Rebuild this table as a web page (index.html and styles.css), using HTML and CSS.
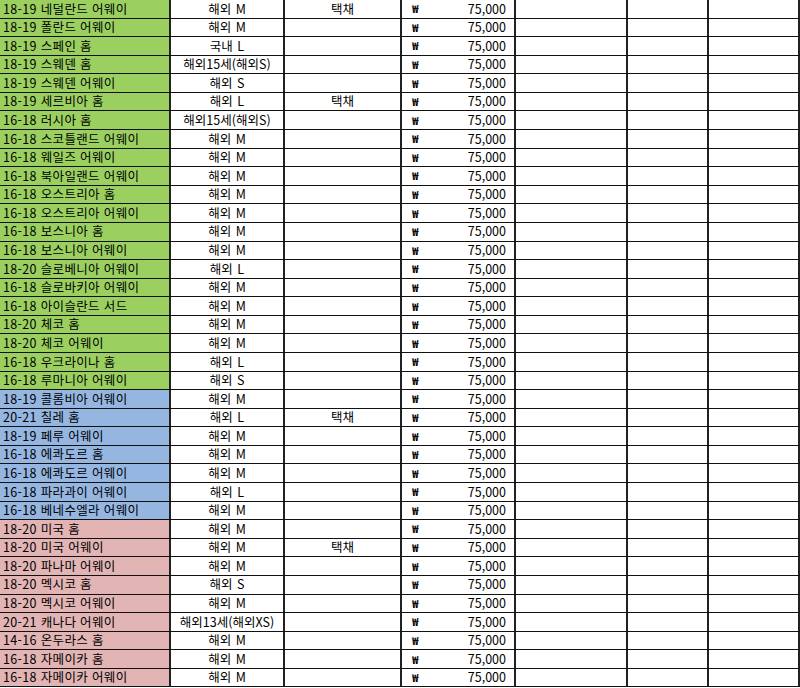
FILE: index.html
```html
<!DOCTYPE html>
<html lang="ko">
<head>
<meta charset="utf-8">
<title>유니폼 목록</title>
<link rel="stylesheet" href="styles.css">
</head>
<body>
<div class="sheet">
  <div class="row"><div class="c name g">18-19 네덜란드 어웨이</div><div class="c size">해외 M</div><div class="c tag">택채</div><div class="c price"><span class="won">₩</span><span>75,000</span></div><div class="c"></div><div class="c"></div><div class="c"></div></div>
  <div class="row"><div class="c name g">18-19 폴란드 어웨이</div><div class="c size">해외 M</div><div class="c tag"></div><div class="c price"><span class="won">₩</span><span>75,000</span></div><div class="c"></div><div class="c"></div><div class="c"></div></div>
  <div class="row"><div class="c name g">18-19 스페인 홈</div><div class="c size">국내 L</div><div class="c tag"></div><div class="c price"><span class="won">₩</span><span>75,000</span></div><div class="c"></div><div class="c"></div><div class="c"></div></div>
  <div class="row"><div class="c name g">18-19 스웨덴 홈</div><div class="c size">해외15세(해외S)</div><div class="c tag"></div><div class="c price"><span class="won">₩</span><span>75,000</span></div><div class="c"></div><div class="c"></div><div class="c"></div></div>
  <div class="row"><div class="c name g">18-19 스웨덴 어웨이</div><div class="c size">해외 S</div><div class="c tag"></div><div class="c price"><span class="won">₩</span><span>75,000</span></div><div class="c"></div><div class="c"></div><div class="c"></div></div>
  <div class="row"><div class="c name g">18-19 세르비아 홈</div><div class="c size">해외 L</div><div class="c tag">택채</div><div class="c price"><span class="won">₩</span><span>75,000</span></div><div class="c"></div><div class="c"></div><div class="c"></div></div>
  <div class="row"><div class="c name g">16-18 러시아 홈</div><div class="c size">해외15세(해외S)</div><div class="c tag"></div><div class="c price"><span class="won">₩</span><span>75,000</span></div><div class="c"></div><div class="c"></div><div class="c"></div></div>
  <div class="row"><div class="c name g">16-18 스코틀랜드 어웨이</div><div class="c size">해외 M</div><div class="c tag"></div><div class="c price"><span class="won">₩</span><span>75,000</span></div><div class="c"></div><div class="c"></div><div class="c"></div></div>
  <div class="row"><div class="c name g">16-18 웨일즈 어웨이</div><div class="c size">해외 M</div><div class="c tag"></div><div class="c price"><span class="won">₩</span><span>75,000</span></div><div class="c"></div><div class="c"></div><div class="c"></div></div>
  <div class="row"><div class="c name g">16-18 북아일랜드 어웨이</div><div class="c size">해외 M</div><div class="c tag"></div><div class="c price"><span class="won">₩</span><span>75,000</span></div><div class="c"></div><div class="c"></div><div class="c"></div></div>
  <div class="row"><div class="c name g">16-18 오스트리아 홈</div><div class="c size">해외 M</div><div class="c tag"></div><div class="c price"><span class="won">₩</span><span>75,000</span></div><div class="c"></div><div class="c"></div><div class="c"></div></div>
  <div class="row"><div class="c name g">16-18 오스트리아 어웨이</div><div class="c size">해외 M</div><div class="c tag"></div><div class="c price"><span class="won">₩</span><span>75,000</span></div><div class="c"></div><div class="c"></div><div class="c"></div></div>
  <div class="row"><div class="c name g">16-18 보스니아 홈</div><div class="c size">해외 M</div><div class="c tag"></div><div class="c price"><span class="won">₩</span><span>75,000</span></div><div class="c"></div><div class="c"></div><div class="c"></div></div>
  <div class="row"><div class="c name g">16-18 보스니아 어웨이</div><div class="c size">해외 M</div><div class="c tag"></div><div class="c price"><span class="won">₩</span><span>75,000</span></div><div class="c"></div><div class="c"></div><div class="c"></div></div>
  <div class="row"><div class="c name g">18-20 슬로베니아 어웨이</div><div class="c size">해외 L</div><div class="c tag"></div><div class="c price"><span class="won">₩</span><span>75,000</span></div><div class="c"></div><div class="c"></div><div class="c"></div></div>
  <div class="row"><div class="c name g">16-18 슬로바키아 어웨이</div><div class="c size">해외 M</div><div class="c tag"></div><div class="c price"><span class="won">₩</span><span>75,000</span></div><div class="c"></div><div class="c"></div><div class="c"></div></div>
  <div class="row"><div class="c name g">16-18 아이슬란드 서드</div><div class="c size">해외 M</div><div class="c tag"></div><div class="c price"><span class="won">₩</span><span>75,000</span></div><div class="c"></div><div class="c"></div><div class="c"></div></div>
  <div class="row"><div class="c name g">18-20 체코 홈</div><div class="c size">해외 M</div><div class="c tag"></div><div class="c price"><span class="won">₩</span><span>75,000</span></div><div class="c"></div><div class="c"></div><div class="c"></div></div>
  <div class="row"><div class="c name g">18-20 체코 어웨이</div><div class="c size">해외 M</div><div class="c tag"></div><div class="c price"><span class="won">₩</span><span>75,000</span></div><div class="c"></div><div class="c"></div><div class="c"></div></div>
  <div class="row"><div class="c name g">16-18 우크라이나 홈</div><div class="c size">해외 L</div><div class="c tag"></div><div class="c price"><span class="won">₩</span><span>75,000</span></div><div class="c"></div><div class="c"></div><div class="c"></div></div>
  <div class="row"><div class="c name g">16-18 루마니아 어웨이</div><div class="c size">해외 S</div><div class="c tag"></div><div class="c price"><span class="won">₩</span><span>75,000</span></div><div class="c"></div><div class="c"></div><div class="c"></div></div>
  <div class="row"><div class="c name b">18-19 콜롬비아 어웨이</div><div class="c size">해외 M</div><div class="c tag"></div><div class="c price"><span class="won">₩</span><span>75,000</span></div><div class="c"></div><div class="c"></div><div class="c"></div></div>
  <div class="row"><div class="c name b">20-21 칠레 홈</div><div class="c size">해외 L</div><div class="c tag">택채</div><div class="c price"><span class="won">₩</span><span>75,000</span></div><div class="c"></div><div class="c"></div><div class="c"></div></div>
  <div class="row"><div class="c name b">18-19 페루 어웨이</div><div class="c size">해외 M</div><div class="c tag"></div><div class="c price"><span class="won">₩</span><span>75,000</span></div><div class="c"></div><div class="c"></div><div class="c"></div></div>
  <div class="row"><div class="c name b">16-18 에콰도르 홈</div><div class="c size">해외 M</div><div class="c tag"></div><div class="c price"><span class="won">₩</span><span>75,000</span></div><div class="c"></div><div class="c"></div><div class="c"></div></div>
  <div class="row"><div class="c name b">16-18 에콰도르 어웨이</div><div class="c size">해외 M</div><div class="c tag"></div><div class="c price"><span class="won">₩</span><span>75,000</span></div><div class="c"></div><div class="c"></div><div class="c"></div></div>
  <div class="row"><div class="c name b">16-18 파라과이 어웨이</div><div class="c size">해외 L</div><div class="c tag"></div><div class="c price"><span class="won">₩</span><span>75,000</span></div><div class="c"></div><div class="c"></div><div class="c"></div></div>
  <div class="row"><div class="c name b">16-18 베네수엘라 어웨이</div><div class="c size">해외 M</div><div class="c tag"></div><div class="c price"><span class="won">₩</span><span>75,000</span></div><div class="c"></div><div class="c"></div><div class="c"></div></div>
  <div class="row"><div class="c name p">18-20 미국 홈</div><div class="c size">해외 M</div><div class="c tag"></div><div class="c price"><span class="won">₩</span><span>75,000</span></div><div class="c"></div><div class="c"></div><div class="c"></div></div>
  <div class="row"><div class="c name p">18-20 미국 어웨이</div><div class="c size">해외 M</div><div class="c tag">택채</div><div class="c price"><span class="won">₩</span><span>75,000</span></div><div class="c"></div><div class="c"></div><div class="c"></div></div>
  <div class="row"><div class="c name p">18-20 파나마 어웨이</div><div class="c size">해외 M</div><div class="c tag"></div><div class="c price"><span class="won">₩</span><span>75,000</span></div><div class="c"></div><div class="c"></div><div class="c"></div></div>
  <div class="row"><div class="c name p">18-20 멕시코 홈</div><div class="c size">해외 S</div><div class="c tag"></div><div class="c price"><span class="won">₩</span><span>75,000</span></div><div class="c"></div><div class="c"></div><div class="c"></div></div>
  <div class="row"><div class="c name p">18-20 멕시코 어웨이</div><div class="c size">해외 M</div><div class="c tag"></div><div class="c price"><span class="won">₩</span><span>75,000</span></div><div class="c"></div><div class="c"></div><div class="c"></div></div>
  <div class="row"><div class="c name p">20-21 캐나다 어웨이</div><div class="c size">해외13세(해외XS)</div><div class="c tag"></div><div class="c price"><span class="won">₩</span><span>75,000</span></div><div class="c"></div><div class="c"></div><div class="c"></div></div>
  <div class="row"><div class="c name p">14-16 온두라스 홈</div><div class="c size">해외 M</div><div class="c tag"></div><div class="c price"><span class="won">₩</span><span>75,000</span></div><div class="c"></div><div class="c"></div><div class="c"></div></div>
  <div class="row"><div class="c name p">16-18 자메이카 홈</div><div class="c size">해외 M</div><div class="c tag"></div><div class="c price"><span class="won">₩</span><span>75,000</span></div><div class="c"></div><div class="c"></div><div class="c"></div></div>
  <div class="row"><div class="c name p">16-18 자메이카 어웨이</div><div class="c size">해외 M</div><div class="c tag"></div><div class="c price"><span class="won">₩</span><span>75,000</span></div><div class="c"></div><div class="c"></div><div class="c"></div></div>
</div>
</body>
</html>
```
FILE: styles.css
```css
html, body {
  margin: 0;
  padding: 0;
  background: #ffffff;
}
body {
  font-family: "Noto Sans CJK KR", "Noto Sans", sans-serif;
  font-size: 12.5px;
  color: #000;
  overflow: hidden;
}
.sheet {
  width: 800px;
  display: flex;
  flex-direction: column;
}
.row {
  display: grid;
  grid-template-columns: 171px 114px 117px 114px 112px 81px 91px;
  height: 18.58px;
  box-sizing: border-box;
  border-bottom: 1px solid #111;
}
.c {
  box-sizing: border-box;
  border-right: 2px solid #222;
  display: flex;
  align-items: center;
  line-height: 1;
  white-space: nowrap;
  overflow: hidden;
}
.name {
  padding-left: 3px;
  letter-spacing: 0.35px;
}
.size, .tag {
  justify-content: center;
  word-spacing: 1px;
}
.price {
  justify-content: space-between;
  padding: 0 8px 0 10px;
}
.won {
  font-weight: 700;
  font-size: 11px;
}
.g { background: #9bd060; }
.b { background: #95b6e0; }
.p { background: #e2b4b4; }
```
